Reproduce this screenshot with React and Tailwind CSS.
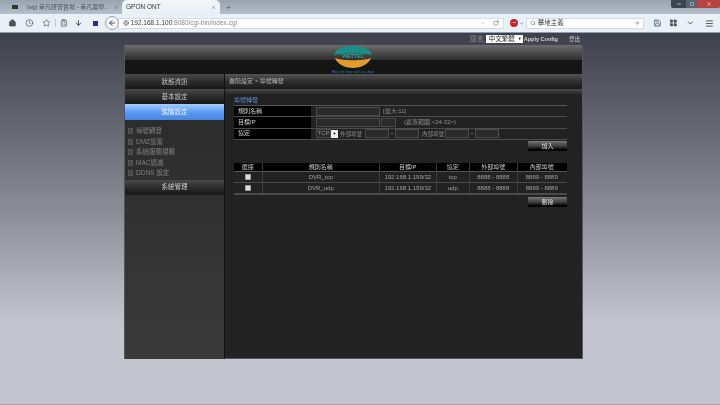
import React from 'react';
import { Home, Clock, Star, ClipboardList, ArrowDown, ArrowLeft, Globe, ChevronDown, RotateCw, Search, ArrowRight, Menu, Minus, Square, X, Plus, Save, LayoutGrid } from 'lucide-react';

const F = { fontFamily: '"Liberation Sans","Noto Sans CJK TC",sans-serif' };

function NavBtn({ children, active }) {
  return (
    <div className={active
      ? 'h-[16px] flex items-center justify-center text-[6.5px] text-[#e8f0ff] bg-gradient-to-b from-[#a5cdfb] via-[#5b9bf2] to-[#4a86e0]'
      : 'h-[15px] flex items-center justify-center text-[6.5px] text-[#c8c8c8] bg-gradient-to-b from-[#4a4a4a] via-[#2c2c2c] to-[#181818]'}>
      {children}
    </div>
  );
}

function SubItem({ children }) {
  return (
    <div className="h-[10.5px] flex items-center gap-[3px] pl-[3px] text-[6.5px] text-[#808080] whitespace-nowrap">
      <span className="w-[5px] h-[6px] bg-[#444] border border-[#555]" />
      <span>{children}</span>
    </div>
  );
}

function Inp({ w }) {
  return <span className={`${w} h-[9px] inline-block shrink-0 bg-[#2a2a2a] border border-[#4a4a4a]`} />;
}

function FormRow({ label, children }) {
  return (
    <div className="flex h-[11.3px] border-b border-[#4c4c4c]">
      <div className="w-[77px] bg-black text-[#d0d0d0] text-[6px] pl-[4px] flex items-center">{label}</div>
      <div className="flex-1 flex items-center pl-[5px] text-[6px] text-[#909090] whitespace-nowrap">{children}</div>
    </div>
  );
}

function ActBtn({ children }) {
  return (
    <div className="w-[39px] h-[10px] flex items-center justify-center text-[6px] text-[#dcdcdc] rounded-[1px] bg-gradient-to-b from-[#6a6a6a] via-[#3a3a3a] to-black border-t border-[#777]">
      {children}
    </div>
  );
}

const cols = 'grid grid-cols-[28.5px_117.5px_56.5px_33.5px_47.5px_48.5px]';

function DataRow({ name, proto, ext, int: inn, thick }) {
  const c = 'flex items-center justify-center border-r border-[#3c3c3c] last:border-r-0';
  return (
    <div className={`${cols} h-[11.5px] text-[6px] text-[#a0a0a0] border-b ${thick ? 'border-b-2 border-[#4a4a4a]' : 'border-[#4a4a4a]'}`}>
      <div className={c}><span className="w-[6px] h-[6px] bg-[#dcdcdc] border border-[#999]" /></div>
      <div className={c}>{name}</div>
      <div className={c}>192.168.1.199/32</div>
      <div className={c}>{proto}</div>
      <div className={c}>{ext}</div>
      <div className={c}>{inn}</div>
    </div>
  );
}

export default function App() {
  const ic = 'text-[#4a5560]';
  return (
    <div style={F} className="w-[720px] h-[405px] overflow-hidden flex flex-col bg-[#c3c6cf] blur-[0.25px]">
      {/* tab strip */}
      <div className="h-[14px] shrink-0 flex items-end bg-gradient-to-b from-[#98a3b1] to-[#b4bfcb] relative">
        <div className="w-[122px] h-[14px] flex items-center pl-[12px] text-[6px] text-[#4c5560]">
          <span className="w-[6px] h-[4px] bg-[#333] mr-[9px] shrink-0" />
          <span className="flex-1 whitespace-nowrap">[wjj] 幸凡研習賣場 - 幸凡票學...</span>
          <X size={5} className="mx-[5px] text-[#555] shrink-0" />
        </div>
        <div className="w-[98px] h-[14px] flex items-center pl-[4px] pr-[4px] text-[6.5px] text-[#333] bg-gradient-to-b from-[#f2f6fa] to-[#e8eff6] rounded-t-[5px]">
          <span className="flex-1">GPON ONT</span>
          <X size={5} className="text-[#555]" />
        </div>
        <Plus size={7} className="ml-[5px] mb-[3px] text-[#59636f]" />
        <div className="absolute right-0 top-0 w-[49px] h-[8px] flex rounded-b-[2px] overflow-hidden">
          <div className="w-[15px] bg-[#3b4552] flex items-center justify-center"><Minus size={6} className="text-white" /></div>
          <div className="w-[11px] bg-[#5a6573] flex items-center justify-center"><Square size={4} className="text-white" /></div>
          <div className="flex-1 bg-[#b5433f] flex items-center justify-center"><X size={6} className="text-white" /></div>
        </div>
      </div>
      {/* toolbar */}
      <div className="h-[19px] shrink-0 flex items-center pl-[4px] bg-[#e9f0f7] border-b border-[#8f9eae]">
        <Home size={8} className={`${ic} w-[17px]`} fill="currentColor" />
        <Clock size={8} className={`${ic} w-[17px]`} />
        <Star size={8} className={`${ic} w-[17px]`} />
        <ClipboardList size={8} className={`${ic} w-[17px] -mr-[1px] border-l border-[#c0c8d0]`} />
        <ArrowDown size={8} className={`${ic} w-[17px]`} strokeWidth={3} />
        <span className="w-[5px] h-[5px] bg-[#2a2a9a] mx-[6px]" />
        <span className="ml-[1px] w-[14px] h-[14px] rounded-full border border-[#97a3b0] bg-[#f3f6f9] flex items-center justify-center z-10 shrink-0">
          <ArrowLeft size={8} strokeWidth={3} className="text-[#47525e]" />
        </span>
        <div className="w-[389px] -ml-[1px] h-[11px] bg-white border border-[#d3dbe3] flex items-center pl-[4px] pr-[4px] text-[6.5px]">
          <Globe size={6} className="text-[#666] mr-[1.5px]" />
          <span className="text-[#333]">192.168.1.100</span>
          <span className="text-[#8a8a8a]">:8080/cgi-bin/index.cgi</span>
          <span className="flex-1" />
          <ChevronDown size={6} className="text-[#aaa] mr-[7px]" />
          <RotateCw size={6} className="text-[#555]" />
        </div>
        <span className="ml-[6px] w-[8px] h-[8px] rounded-full bg-[#c0232c] flex items-center justify-center text-[2.5px] text-white font-bold">ABP</span>
        <ChevronDown size={5} className="text-[#444] ml-[1px]" />
        <div className="w-[119px] ml-[2px] h-[11px] bg-white border border-[#d3dbe3] flex items-center pl-[3px] pr-[3px] text-[6.5px] text-[#333]">
          <Search size={6} className="text-[#666] mr-[2px]" />
          <span className="flex-1">攀地主義</span>
          <ArrowRight size={6} className="text-[#666]" />
        </div>
        <Save size={8} className={`${ic} ml-[5px] w-[17px]`} />
        <LayoutGrid size={8} className={`${ic} w-[17px]`} fill="currentColor" />
        <ChevronDown size={8} strokeWidth={3} className={`${ic} w-[17px]`} />
        <Menu size={9} strokeWidth={2.5} className={`${ic} w-[21px]`} />
      </div>
      {/* page */}
      <div className="flex-1 bg-gradient-to-b from-[#3e404c] via-[#8e919a] via-50% to-[#c3c6cf] to-[78%] border-b border-[#9aa3ae] flex flex-col pl-[124px]">
        <div className="w-[459px]">
          {/* top links */}
          <div className="h-[12px] flex items-center justify-end pr-[3px] text-[5.5px] text-[#d0d0d0]">
            <span className="text-[7px] text-[#8a8a8a] mr-[2px]">語言</span>
            <span className="w-[37px] h-[8px] bg-white text-[#222] text-[6.5px] flex items-center justify-between pl-[3px] pr-[1px] mr-[1px]">
              中文繁體<span className="text-[4px] text-black">▼</span>
            </span>
            <span className="font-bold mr-[11px]">Apply Config</span>
            <span>登出</span>
          </div>
          <div className="border-x border-b border-[#565660] bg-[#222]">
            {/* header */}
            <div className="h-[15px] bg-gradient-to-b from-[#6e6e6e] to-[#2e2e2e]" />
            <div className="h-[14px] bg-[#151515] relative">
              <svg viewBox="0 0 48 29" width="48" height="29" className="absolute left-[204px] -top-[15px]">
                <path d="M5 10 C6 4 15 1 24 1 C33 1 42 4 43 10 C34 8 14 8 5 10Z" fill="#1a8f88" />
                <path d="M6 13 C14 16 34 16 42 13 C40 19 32 23 24 23 C16 23 8 19 6 13Z" fill="#e39a2c" />
                <text x="24" y="12.5" textAnchor="middle" fontSize="5.5" fontWeight="700" fill="#2aa89e" fontFamily="Liberation Sans">VIETTEL</text>
                <text x="24" y="27.5" textAnchor="middle" fontSize="3.6" fill="#1f8f9f" fontFamily="Liberation Sans">Hãy nói theo cách của bạn</text>
              </svg>
            </div>
            {/* body */}
            <div className="flex h-[284px]">
              <div className="w-[100px] shrink-0 bg-gradient-to-b from-[#2a2a2a] to-[#3a3a3a] mb-[-1px] border-r border-[#111]">
                <NavBtn>狀態資訊</NavBtn>
                <NavBtn>基本設定</NavBtn>
                <NavBtn active>進階設定</NavBtn>
                <div className="pt-[6px] pb-[1px]">
                  <SubItem>埠號轉發</SubItem>
                  <SubItem>DMZ設置</SubItem>
                  <SubItem>系統服務規範</SubItem>
                  <SubItem>MAC過濾</SubItem>
                  <SubItem>DDNS 設定</SubItem>
                </div>
                <NavBtn>系統管理</NavBtn>
              </div>
              <div className="flex-1 min-w-0">
                <div className="h-[15px] bg-gradient-to-b from-[#555] via-[#2e2e2e] to-[#1a1a1a] flex items-center pl-[4px] text-[6px] text-[#b4b4b4]">進階設定 &gt; 埠號轉發</div>
                <div className="h-[6px] bg-gradient-to-b from-[#4a4a4a] to-[#222]" />
                <div className="pl-[9px] pr-[15px]">
                  <div className="h-[10px] flex items-center text-[6px] text-[#5c8cc8]">埠號轉發</div>
                  <div className="border-t border-[#555]">
                    <FormRow label="規則名稱">
                      <Inp w="w-[64px]" /><span className="ml-[3px]">[最大:11]</span>
                    </FormRow>
                    <FormRow label="目標IP">
                      <Inp w="w-[64px]" /><span className="ml-[1px]" /><Inp w="w-[15px]" /><span className="ml-[8px]">(遮罩範圍:&lt;24-32&gt;)</span>
                    </FormRow>
                    <FormRow label="協定">
                      <span className="w-[15px] h-[9px] shrink-0 border border-[#4a4a4a] bg-[#2a2a2a] flex items-center justify-center">TCP</span>
                      <span className="w-[7px] h-[8px] shrink-0 bg-[#eee] text-black text-[4px] flex items-center justify-center">▼</span>
                      <span className="ml-[2px] w-[25px] shrink-0 text-[5.5px]">外部埠號</span>
                      <Inp w="w-[24px]" /><span className="w-[6px] shrink-0 text-center">-</span><Inp w="w-[24px]" />
                      <span className="ml-[3px] w-[23px] shrink-0 text-[5.5px]">內部埠號</span>
                      <Inp w="w-[24px]" /><span className="w-[6px] shrink-0 text-center">-</span><Inp w="w-[24px]" />
                    </FormRow>
                  </div>
                  <div className="flex justify-end pt-[1.5px]"><ActBtn>加入</ActBtn></div>
                  <div className="mt-[11.5px]">
                    <div className={`${cols} h-[9px] bg-black text-[6px] text-[#cccccc] border-b border-[#555]`}>
                      {['選擇', '規則名稱', '目標IP', '協定', '外部埠號', '內部埠號'].map((t) => (
                        <div key={t} className="flex items-center justify-center border-r border-[#3c3c3c] last:border-r-0">{t}</div>
                      ))}
                    </div>
                    <DataRow name="DVR_tcp" proto="tcp" ext="8888 - 8888" int="8889 - 8889" />
                    <DataRow name="DVR_udp" proto="udp" ext="8888 - 8888" int="8889 - 8889" thick />
                  </div>
                  <div className="flex justify-end pt-[2px]"><ActBtn>刪除</ActBtn></div>
                </div>
              </div>
            </div>
          </div>
        </div>
      </div>
    </div>
  );
}
